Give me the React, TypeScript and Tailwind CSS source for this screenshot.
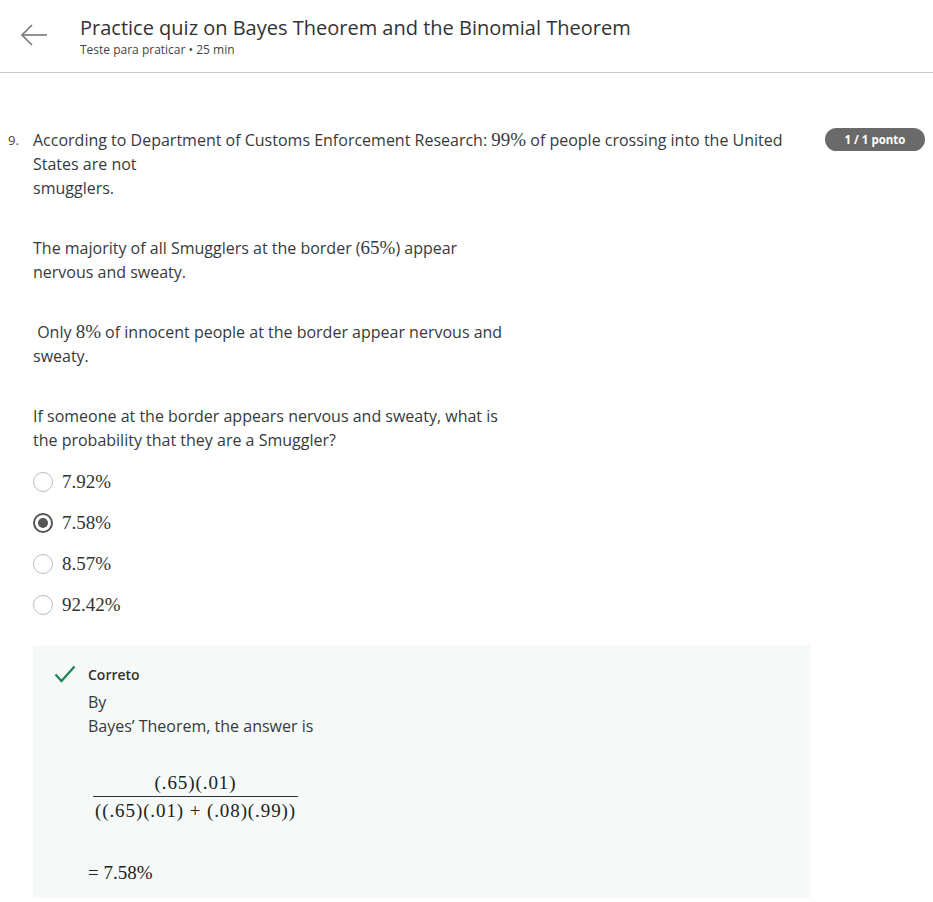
import React from "react";

const serif = { fontFamily: '"Liberation Serif", "Times New Roman", serif' };

function Radio({ checked }: { checked?: boolean }) {
  return checked ? (
    <span className="flex h-[20px] w-[20px] items-center justify-center rounded-full border-[2px] border-[#555]">
      <span className="h-[10px] w-[10px] rounded-full bg-[#555]" />
    </span>
  ) : (
    <span className="h-[20px] w-[20px] rounded-full border-[1.5px] border-[#bdbdbd]" />
  );
}

export default function App() {
  const options = ["7.92%", "7.58%", "8.57%", "92.42%"];
  return (
    <div className="min-h-[902px] w-[933px] bg-white text-[#373a3c]" style={{ fontFamily: '"Open Sans", sans-serif' }}>
      <header className="flex h-[73px] items-center border-b border-[#c9c9c9]">
        <div className="flex w-[80px] justify-start pl-[20px] pb-[2px]">
          <svg width="28" height="24" viewBox="0 0 28 24" fill="none" stroke="#777" strokeWidth="1.6">
            <path d="M27 12H2" />
            <path d="M12 2L2 12l10 10" />
          </svg>
        </div>
        <div className="flex flex-col pt-[1px]">
          <div className="text-[20px] leading-[26px] text-[#333]">Practice quiz on Bayes Theorem and the Binomial Theorem</div>
          <div className="text-[12px] leading-[18px] text-[#444]">Teste para praticar • 25 min</div>
        </div>
      </header>

      <main className="flex pt-[55px]">
        <div className="w-[33px] pl-[8px] text-[13px] leading-[24px] text-[#444]">9.</div>
        <div className="w-[777px] text-[16px] leading-[24px]">
          <p>
            According to Department of Customs Enforcement Research: <span className="text-[19px]" style={serif}>99%</span> of people crossing into the United
            <br />
            States are not
            <br />
            smugglers.
          </p>
          <p className="mt-[36px]">
            The majority of all Smugglers at the border (<span className="text-[19px]" style={serif}>65%</span>) appear
            <br />
            nervous and sweaty.
          </p>
          <p className="mt-[36px]">
            &nbsp;Only <span className="text-[19px]" style={serif}>8%</span> of innocent people at the border appear nervous and
            <br />
            sweaty.
          </p>
          <p className="mt-[36px]">
            If someone at the border appears nervous and sweaty, what is
            <br />
            the probability that they are a Smuggler?
          </p>

          <div className="mt-[9px] flex flex-col">
            {options.map((o, i) => (
              <div key={o} className="flex h-[41px] items-center gap-[9px]">
                <Radio checked={i === 1} />
                <span className="text-[19px] text-[#333]" style={serif}>{o}</span>
              </div>
            ))}
          </div>

          <div className="mt-[20px] flex h-[253px] bg-[#f5f9f8] pl-[21px] pt-[20px]">
            <div className="w-[34px]">
              <svg width="22" height="18" viewBox="0 0 22 18" fill="none" stroke="#1f8354" strokeWidth="2.2">
                <path d="M1.5 9.5l6 6.5L20.5 1.5" />
              </svg>
            </div>
            <div className="flex flex-col">
              <div className="text-[14px] font-semibold leading-[20px] text-[#333]">Correto</div>
              <div className="mt-[5px] text-[16px] leading-[24px]">By</div>
              <div className="text-[16px] leading-[24px]">Bayes’ Theorem, the answer is</div>
              <div className="mt-[32px] ml-[5px] flex w-[205px] flex-col items-center text-[19px] tracking-[0.9px] text-[#222]" style={serif}>
                <div className="leading-[26px]">(.65)(.01)</div>
                <div className="h-px w-full bg-[#333]" />
                <div className="leading-[28px]">((.65)(.01) + (.08)(.99))</div>
              </div>
              <div className="mt-[36px] text-[19px] text-[#222]" style={serif}>= 7.58%</div>
            </div>
          </div>
        </div>
        <div className="ml-[15px] flex">
          <span className="flex h-[23px] w-[100px] items-center justify-center rounded-full bg-[#6a6a6a] text-[11.5px] font-bold text-white">
            1 / 1 ponto
          </span>
        </div>
      </main>
    </div>
  );
}
